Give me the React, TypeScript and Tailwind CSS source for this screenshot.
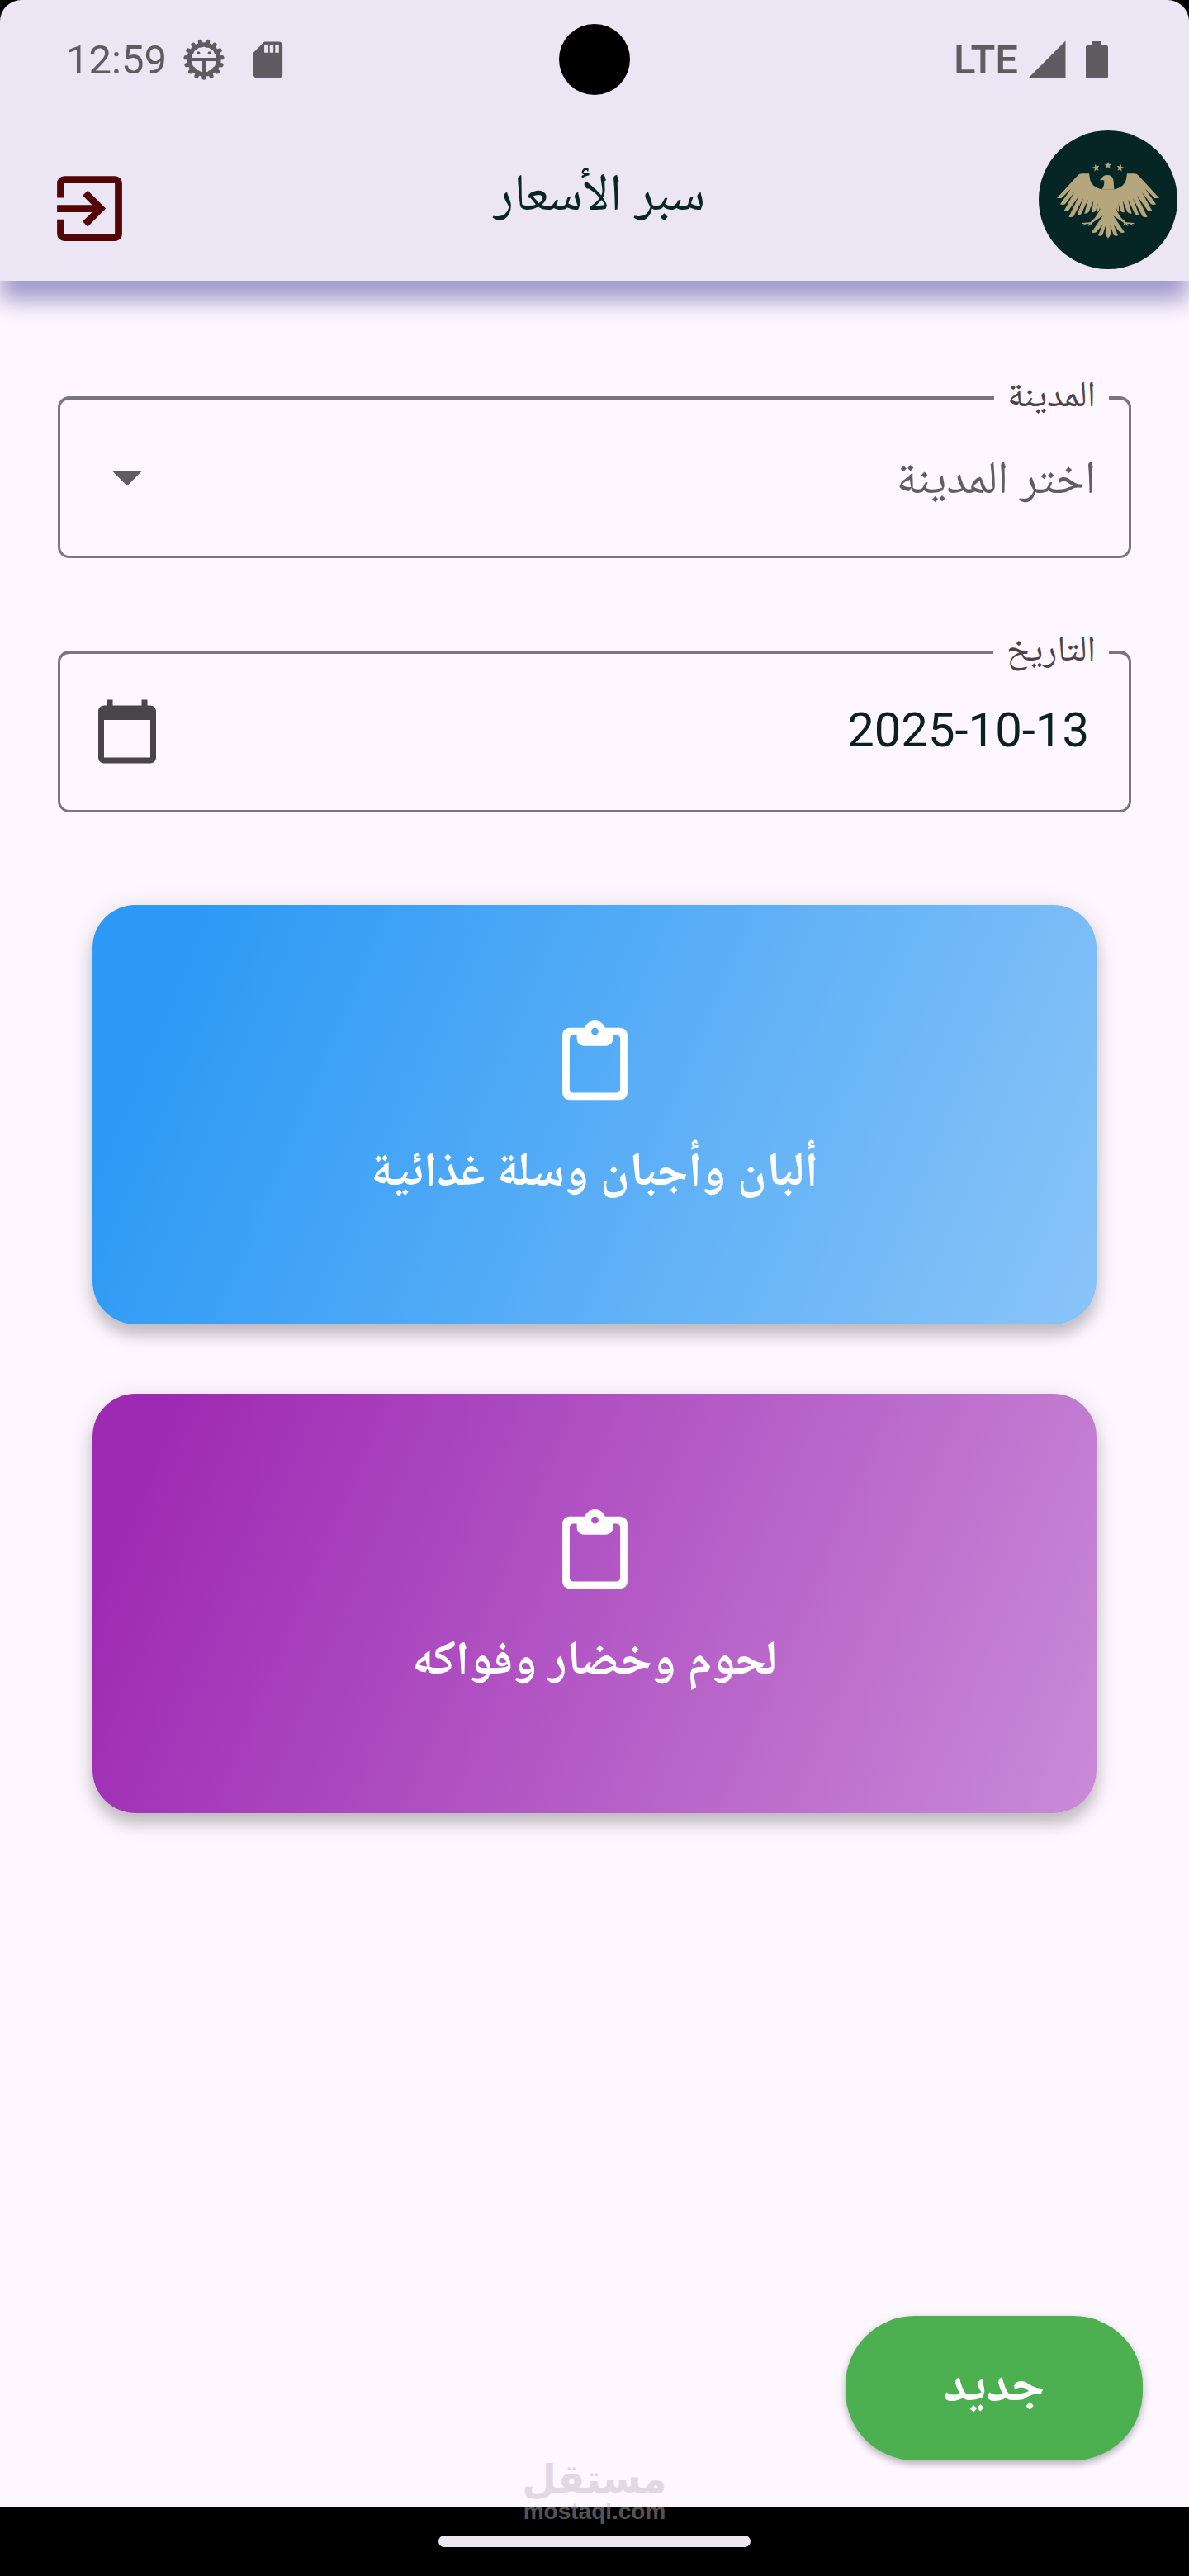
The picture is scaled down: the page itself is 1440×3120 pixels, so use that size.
import type { ReactNode } from "react";
import { MdArrowDropDown, MdExitToApp, MdSdCard, MdSignalCellular4Bar } from "react-icons/md";

interface Category {
  title: string;
  gradient: string;
}

const categories: Category[] = [
  {
    title: "ألبان وأجبان وسلة غذائية",
    gradient: "bg-[linear-gradient(113deg,#2b99f5_8%,#8ac4f8)]",
  },
  {
    title: "لحوم وخضار وفواكه",
    gradient: "bg-[linear-gradient(113deg,#9e29b3_6%,#c98bd8)]",
  },
];

const cogTeeth = Array.from({ length: 15 }, (_, i) => (i * 2 * Math.PI) / 15 + Math.PI / 2);

function DebugIcon() {
  return (
    <svg viewBox="-75 -75 150 150" className="size-[50px]" fill="currentColor" aria-hidden="true">
      {cogTeeth.map((a) => (
        <line
          key={a}
          x1={Math.cos(a) * 52}
          y1={Math.sin(a) * 52}
          x2={Math.cos(a) * 66}
          y2={Math.sin(a) * 66}
          stroke="currentColor"
          strokeWidth="16"
          strokeLinecap="round"
        />
      ))}
      <circle r="54" fill="none" stroke="currentColor" strokeWidth="16" />
      <path d="M-50-6H50V6H6V50H-6V6H-50z" />
      <circle cx="-20" cy="-23" r="6" />
      <circle cx="20" cy="-23" r="6" />
    </svg>
  );
}

function BatteryIcon() {
  return (
    <svg viewBox="0 0 27 45" className="h-[45px] w-[27px]" fill="currentColor" aria-hidden="true">
      <path d="M8 0h11v5h6a2 2 0 0 1 2 2v36a2 2 0 0 1-2 2H2a2 2 0 0 1-2-2V7a2 2 0 0 1 2-2h6z" />
    </svg>
  );
}

function CalendarIcon() {
  return (
    <svg viewBox="0 0 24 24" className="size-[84px] shrink-0 text-[#4a454a]" fill="currentColor" aria-hidden="true">
      <path d="M20 3h-1V1h-2v2H7V1H5v2H4c-1.1 0-2 .9-2 2v16c0 1.1.9 2 2 2h16c1.1 0 2-.9 2-2V5c0-1.1-.9-2-2-2zm0 18H4V8h16v13z" />
    </svg>
  );
}

function ClipboardIcon() {
  return (
    <svg viewBox="0 0 24 24" className="size-[105px]" fill="currentColor" fillRule="evenodd" aria-hidden="true">
      <path d="M19 2h-4.18C14.4.84 13.3 0 12 0S9.6.84 9.18 2H5c-1.1 0-2 .9-2 2v16c0 1.1.9 2 2 2h14c1.1 0 2-.9 2-2V4c0-1.1-.9-2-2-2zm-7 0c.55 0 1 .45 1 1s-.45 1-1 1-1-.45-1-1 .45-1 1-1zm6 18H6c-.55 0-1-.45-1-1V5c0-.55.45-1 1-1h1v1c0 1.1.9 2 2 2h6c1.1 0 2-.9 2-2V4h1c.55 0 1 .45 1 1v14c0 .55-.45 1-1 1z" />
    </svg>
  );
}

const star = "M0-14 3-5 13-5 5 2 8 12 0 6-8 12-5 2-13-5-3-5z";

// left half only, mirrored around x=306
const wing =
  "M306 268H284C256 263 240 246 239 222L237 211H212Q202 211 195 218L120 300 137 300 172 265 132 322Q142 326 150 322L183 278 146 346Q156 350 163 344L201 291 163 368Q174 371 181 366L216 300 194 360Q204 362 209 356L234 304 220 356Q230 357 236 350L253 308 246 352Q256 353 262 344L268 319 266 350Q272 350 274 345L276 333 277 343 258 372 241 388 212 390 212 394 220 394 215 402 226 394 236 393 233 403 243 394 250 402 248 391 261 381 287 364 246 424Q254 428 263 424L286 397 270 436Q280 439 286 434L298 397 296 432 306 446z";

function EagleLogo() {
  return (
    <svg viewBox="54 54 504 504" className="size-[168px]" role="img" aria-label="الشعار">
      <circle cx="306" cy="306" r="252" fill="#052624" />
      <g fill="#b6a67e">
        <path d={wing} />
        <path d={wing} transform="matrix(-1 0 0 1 612 0)" />
        <path d="M284 268C291 256 293 246 292 236 287 233 283 234 279 238 276 231 278 227 285 224 291 216 302 215 309 217 321 219 325 229 326 240L328 268z" />
        <path d={star} transform="translate(262 190) rotate(-12)" />
        <path d={star} transform="translate(306 181)" />
        <path d={star} transform="translate(350 190) rotate(12)" />
      </g>
    </svg>
  );
}

function StatusBar() {
  return (
    <div dir="ltr" className="grid h-36 grid-cols-3 items-center text-[49px] leading-none text-[#5f5c61]">
      <div className="flex items-center pl-20">
        <span>12:59</span>
        <span className="flex items-center gap-[26px] pl-5">
          <DebugIcon />
          <MdSdCard className="size-[53px]" />
        </span>
      </div>
      <div className="size-[86px] justify-self-center rounded-full bg-black" />
      <div className="flex items-center justify-end pr-[98px]">
        <span className="font-medium">LTE</span>
        <MdSignalCellular4Bar className="ml-2 size-[54px]" />
        <span className="pl-5">
          <BatteryIcon />
        </span>
      </div>
    </div>
  );
}

function Toolbar() {
  return (
    <div dir="ltr" className="grid h-[196px] grid-cols-[1fr_auto_1fr] items-center">
      <button type="button" aria-label="خروج" className="justify-self-start pt-5 pl-14 text-[#520606]">
        <MdExitToApp className="size-[105px]" />
      </button>
      <h1 dir="rtl" className="pb-5 pl-3 text-[63px] leading-[95px] text-[#072624]">
        سبر الأسعار
      </h1>
      <div className="justify-self-end pr-[14px]">
        <EagleLogo />
      </div>
    </div>
  );
}

function Field({ id, label, children }: { id: string; label: string; children: ReactNode }) {
  return (
    <fieldset className="min-w-0 rounded-[14px] border-[3px] border-t-4 border-[#7b757f] pr-6 pl-[39px]">
      <legend className="px-4 pb-[10px] text-[44px] leading-[38px] text-[#4a454a]">
        <label htmlFor={id}>{label}</label>
      </legend>
      <div className="mb-[23px] flex h-36 items-center">{children}</div>
    </fieldset>
  );
}

export default function App() {
  return (
    <div
      dir="rtl"
      className="relative flex min-h-screen flex-col bg-black font-['Roboto','Noto_Naskh_Arabic',serif]"
    >
      <header className="relative z-10 rounded-t-[26px] bg-[#ece6f4] shadow-[0_24px_28px_#9f9bcb]">
        <StatusBar />
        <Toolbar />
      </header>

      <main className="flex flex-1 flex-col bg-[#fef7ff] pt-[118px] pb-14">
        <form className="flex flex-col gap-[90px] px-[70px]">
          <Field id="city" label="المدينة">
            <select
              id="city"
              defaultValue=""
              className="h-full min-w-0 flex-1 appearance-none bg-transparent pr-4 text-[56px] text-[#605d62] outline-none"
            >
              <option value="">اختر المدينة</option>
            </select>
            <MdArrowDropDown className="size-[84px] shrink-0 text-[#605d62]" />
          </Field>
          <Field id="date" label="التاريخ">
            <input
              id="date"
              type="text"
              dir="ltr"
              readOnly
              value="2025-10-13"
              className="h-full min-w-0 flex-1 bg-transparent pr-6 pb-1 text-right text-[58px] text-[#0c201f] outline-none"
            />
            <CalendarIcon />
          </Field>
        </form>

        <div className="mt-28 flex flex-col gap-[84px] px-28">
          {categories.map(({ title, gradient }) => (
            <button
              key={title}
              type="button"
              className={`flex flex-col items-center gap-7 rounded-[52px] py-[140px] text-white shadow-[0_14px_16px_rgba(0,0,0,0.16),0_6px_32px_rgba(0,0,0,0.14)] ${gradient}`}
            >
              <ClipboardIcon />
              <span className="text-[58px] leading-[95px] font-bold">{title}</span>
            </button>
          ))}
        </div>

        <button
          type="button"
          className="mt-auto mr-14 self-start rounded-[84px] bg-[#4caf50] px-[118px] pt-[34px] pb-[46px] text-[63px] leading-[95px] font-bold text-white shadow-[0_5px_8px_rgba(0,0,0,0.2),0_2px_12px_rgba(0,0,0,0.12)]"
        >
          جديد
        </button>
      </main>

      <footer className="flex h-[84px] items-center justify-center bg-black">
        <div className="h-[14px] w-[378px] rounded-full bg-[#ece6f0]" />
      </footer>

      {/* watermark sits across the page and the navigation bar */}
      <div className="pointer-events-none absolute inset-x-0 bottom-[62px] flex flex-col items-center font-bold text-[#bcb6bf] opacity-45">
        <span className="font-['DejaVu_Sans',sans-serif] text-[48px] leading-[48px]">مستقل</span>
        <span dir="ltr" className="font-['Liberation_Sans',sans-serif] text-[28px] leading-[32px]">
          mostaql.com
        </span>
      </div>
    </div>
  );
}
